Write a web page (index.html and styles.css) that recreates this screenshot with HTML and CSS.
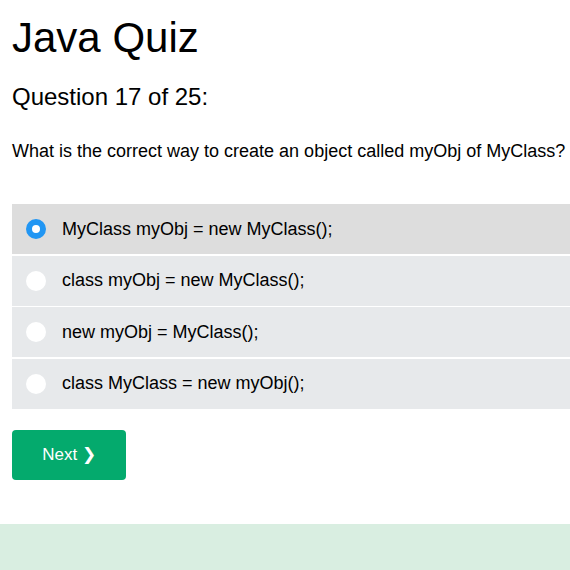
FILE: index.html
```html
<!DOCTYPE html>
<html>
<head>
<meta charset="utf-8">
<link rel="stylesheet" href="styles.css">
</head>
<body>
<main class="quiz">
  <h1 class="title">Java Quiz</h1>
  <h2 class="counter">Question 17 of 25:</h2>
  <p class="question">What is the correct way to create an object called myObj of MyClass?</p>
  <div class="options">
    <label class="option selected"><span class="radio checked"></span><span class="opt-text">MyClass myObj = new MyClass();</span></label>
    <label class="option"><span class="radio"></span><span class="opt-text">class myObj = new MyClass();</span></label>
    <label class="option"><span class="radio"></span><span class="opt-text">new myObj = MyClass();</span></label>
    <label class="option"><span class="radio"></span><span class="opt-text">class MyClass = new myObj();</span></label>
  </div>
  <button class="next">Next ❯</button>
</main>
<footer class="footer"></footer>
</body>
</html>
```
FILE: styles.css
```css
html, body {
  margin: 0;
  padding: 0;
  background: #fff;
  overflow: hidden;
}
body {
  font-family: "Liberation Sans", Arial, sans-serif;
  color: #000;
  width: 570px;
}
.quiz {
  padding: 0 0 0 12px;
  height: 524px;
  box-sizing: border-box;
  overflow: hidden;
}
.title {
  font-size: 42px;
  font-weight: normal;
  margin: 0;
  padding-top: 14px;
  line-height: 48px;
}
.counter {
  font-size: 24px;
  font-weight: normal;
  margin: 0;
  padding-top: 20px;
  line-height: 30px;
}
.question {
  font-size: 18px;
  margin: 0;
  padding-top: 27px;
  line-height: 24px;
}
.options {
  margin-top: 41px;
  display: flex;
  flex-direction: column;
  gap: 1.5px;
  width: 600px;
}
.option {
  display: flex;
  align-items: center;
  height: 50px;
  background: #e7e9eb;
  font-size: 18px;
}
.option.selected {
  background: #dddddd;
}
.radio {
  width: 20px;
  height: 20px;
  border-radius: 50%;
  background: #fff;
  margin-left: 14px;
  margin-right: 16px;
  box-sizing: border-box;
  flex: none;
}
.radio.checked {
  border: 6px solid #2196f3;
}
.next {
  display: block;
  margin-top: 21px;
  width: 114px;
  height: 50px;
  border: none;
  border-radius: 4px;
  background: #04aa6d;
  color: #fff;
  font-family: "Liberation Sans", Arial, sans-serif;
  font-size: 17px;
  padding: 0;
}
.footer {
  height: 46px;
  background: #d9eee1;
}
```
